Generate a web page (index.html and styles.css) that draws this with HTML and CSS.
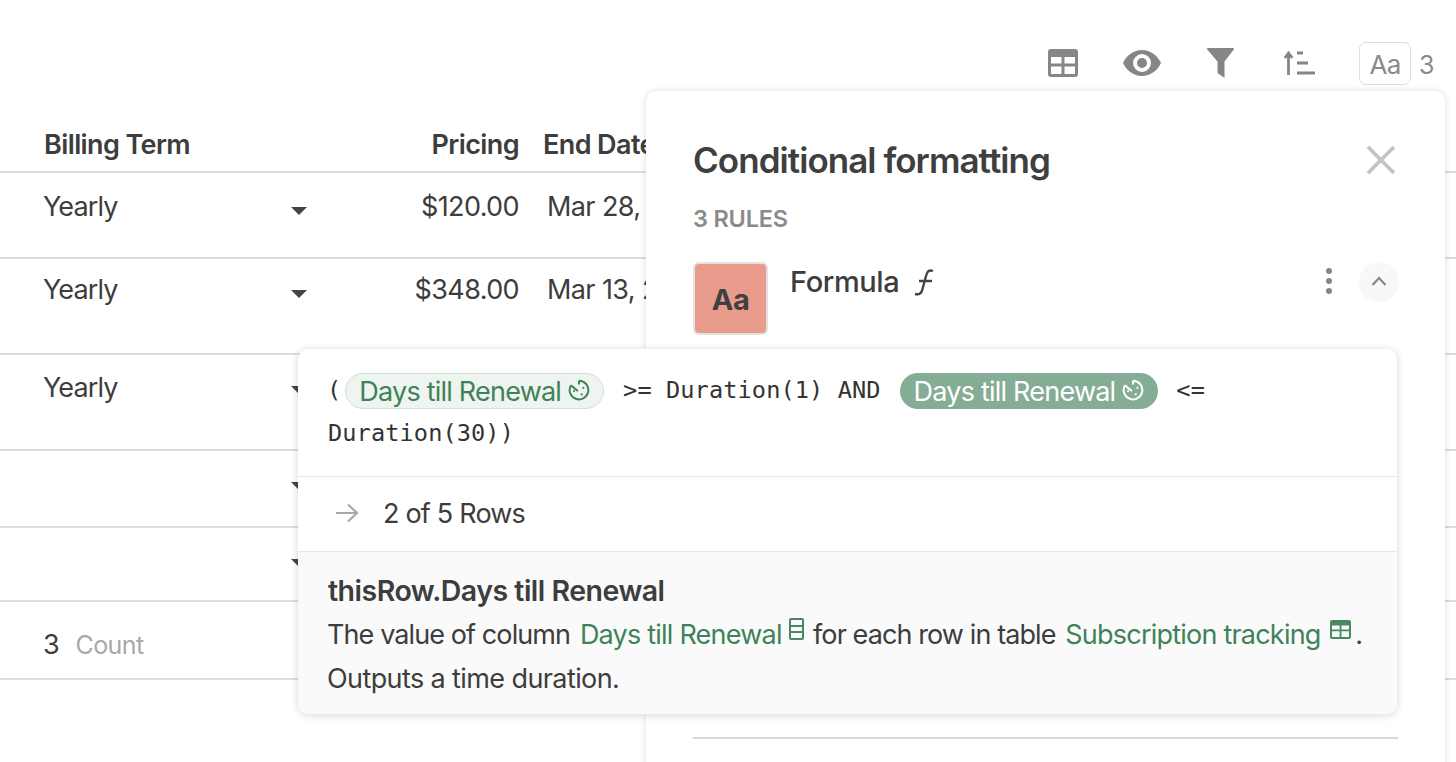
FILE: index.html
```html
<!DOCTYPE html>
<html lang="en">
<head>
    <meta charset="UTF-8">
    <title>Conditional formatting</title>
    <link rel="stylesheet" href="styles.css">
</head>
<body>
    <div class="page">
        <div class="toolbar">
            <svg class="tool tool-table" viewBox="0 0 30 28"><path fill="#868686" fill-rule="evenodd" d="M3 0h24a3 3 0 0 1 3 3v22a3 3 0 0 1-3 3H3a3 3 0 0 1-3-3V3a3 3 0 0 1 3-3zM3 8v6.500h10.500V8zM16.500 8v6.500H27V8zM3 17.500V25h10.500v-7.500zM16.500 17.500V25H27v-7.500z"/></svg>
            <svg class="tool tool-eye" viewBox="0 0 38 26"><path fill="#868686" fill-rule="evenodd" d="M19 0c8.500 0 15.500 5.500 19 13-3.500 7.500-10.500 13-19 13S3.500 20.500 0 13C3.500 5.500 10.500 0 19 0zm0 4a9 9 0 1 0 0 18 9 9 0 0 0 0-18zm0 4a5 5 0 1 1 0 10 5 5 0 0 1 0-10z"/></svg>
            <svg class="tool tool-filter" viewBox="0 0 27 30"><path fill="#868686" d="M1 0h25a1 1 0 0 1 .8 1.600L17.500 13.500V30l-7-5V13.500L.2 1.600A1 1 0 0 1 1 0z"/></svg>
            <svg class="tool tool-sort" viewBox="0 0 31 26"><path fill="none" stroke="#868686" stroke-width="2.800" d="M4.500 25V3M.8 8l3.700-5 3.700 5M13 3h6M13 13h11M13 23h18"/></svg>
            <div class="aa-box">Aa</div>
            <span class="aa-count">3</span>
        </div>

        <div class="table">
            <div class="row row-head">
                <div class="cell-term">Billing Term</div>
                <div class="cell-arrow"></div>
                <div class="cell-price">Pricing</div>
                <div class="cell-date cell-date-head">End Date</div>
            </div>
            <div class="row row-a">
                <div class="cell-term">Yearly</div>
                <div class="cell-arrow"><span class="caret"></span></div>
                <div class="cell-price">$120.00</div>
                <div class="cell-date">Mar 28, 2</div>
            </div>
            <div class="row row-b">
                <div class="cell-term">Yearly</div>
                <div class="cell-arrow"><span class="caret"></span></div>
                <div class="cell-price">$348.00</div>
                <div class="cell-date">Mar 13, 2</div>
            </div>
            <div class="row row-c">
                <div class="cell-term">Yearly</div>
                <div class="cell-arrow"><span class="caret"></span></div>
            </div>
            <div class="row row-d">
                <div class="cell-term"></div>
                <div class="cell-arrow"><span class="caret"></span></div>
            </div>
            <div class="row row-e">
                <div class="cell-term"></div>
                <div class="cell-arrow"><span class="caret"></span></div>
            </div>
            <div class="row row-foot">
                <div class="cell-term">3 <span class="count">Count</span></div>
            </div>
        </div>

        <div class="panel">
            <div class="panel-head">
                <h1>Conditional formatting</h1>
                <svg class="close" viewBox="0 0 30 30"><path fill="none" stroke="#c4c4c4" stroke-width="3.800" d="M2 2l26 26M28 2L2 28"/></svg>
            </div>
            <div class="rules-label">3 RULES</div>
            <div class="rule">
                <div class="swatch">Aa</div>
                <div class="rule-name">Formula
                    <svg class="fx" viewBox="0 0 22 27"><path fill="none" stroke="#444" stroke-width="2.400" d="M20 2c-4-1.500-6 .5-7 5L9.500 20c-1 4.500-3 6-7.500 5M6 12h13"/></svg>
                </div>
                <div class="rule-actions">
                    <svg class="dots" viewBox="0 0 8 28"><circle cx="4" cy="4" r="3" fill="#868686"/><circle cx="4" cy="14" r="3" fill="#868686"/><circle cx="4" cy="24" r="3" fill="#868686"/></svg>
                    <div class="collapse"><svg viewBox="0 0 16 10"><path fill="none" stroke="#868686" stroke-width="2.200" d="M1.500 9L8 2l6.500 7"/></svg></div>
                </div>
            </div>
            <div class="panel-rule"></div>
        </div>

        <div class="popup">
            <div class="formula">
                <span class="mono">(</span>
                <span class="pill pill-light">Days till Renewal
                    <svg class="clock" viewBox="0 0 20 20"><g fill="none" stroke="currentColor" stroke-width="1.800"><path d="M10 1.500a8.500 8.500 0 1 1-7.400 4.300"/><path d="M10 1.500V5M2.600 5.800L9 11"/></g><circle cx="5.500" cy="11" r="1" fill="currentColor"/><circle cx="14" cy="8" r="1" fill="currentColor"/><circle cx="12.500" cy="14" r="1" fill="currentColor"/></svg>
                </span>
                <span class="mono op">&gt;= Duration(1) AND</span>
                <span class="pill pill-dark">Days till Renewal
                    <svg class="clock" viewBox="0 0 20 20"><g fill="none" stroke="currentColor" stroke-width="1.800"><path d="M10 1.500a8.500 8.500 0 1 1-7.400 4.300"/><path d="M10 1.500V5M2.600 5.800L9 11"/></g><circle cx="5.500" cy="11" r="1" fill="currentColor"/><circle cx="14" cy="8" r="1" fill="currentColor"/><circle cx="12.500" cy="14" r="1" fill="currentColor"/></svg>
                </span>
                <span class="mono op">&lt;=</span>
                <div class="mono formula-line">Duration(30))</div>
            </div>
            <div class="result">
                <svg class="arrow" viewBox="0 0 24 20"><path fill="none" stroke="#a8a8a8" stroke-width="2.200" d="M1 10h21M13 1.500l9 8.500-9 8.500"/></svg>
                <span>2 of 5 Rows</span>
            </div>
            <div class="help">
                <div class="help-title">thisRow.Days till Renewal</div>
                <div class="help-text help-refs">The value of column <span class="ref">Days till Renewal</span>
                    <svg class="ref-icon ref-col" viewBox="0 0 15 22"><path fill="none" stroke="#4a8a63" stroke-width="2" d="M2 1h11a1 1 0 0 1 1 1v18a1 1 0 0 1-1 1H2a1 1 0 0 1-1-1V2a1 1 0 0 1 1-1zM1 8h13M1 14h13"/></svg>
                    for each row in table <span class="ref">Subscription tracking</span>
                    <svg class="ref-icon ref-table" viewBox="0 0 21 19"><path fill="#4a8a63" fill-rule="evenodd" d="M2 0h17a2 2 0 0 1 2 2v15a2 2 0 0 1-2 2H2a2 2 0 0 1-2-2V2a2 2 0 0 1 2-2zM2 5.500v4h7.600v-4zM11.400 5.500v4H19v-4zM2 11.300V17h7.600v-5.700zM11.400 11.300V17H19v-5.700z"/></svg>.
                </div>
                <div class="help-text">Outputs a time duration.</div>
            </div>
        </div>
    </div>
</body>
</html>
```

FILE: styles.css
```css
html, body {
    margin: 0;
    padding: 0;
    background: #fff;
}

.page {
    position: relative;
    width: 1456px;
    height: 762px;
    overflow: hidden;
    font-family: Inter, "Liberation Sans", sans-serif;
    font-size: 27px;
    letter-spacing: -0.6px;
    color: #3d3d3d;
}

/* toolbar */
.toolbar {
    display: flex;
    align-items: center;
    height: 44px;
    padding: 41px 22px 0 0;
    justify-content: flex-end;
}

.tool {
    display: block;
    flex: none;
}

.tool-table { width: 30px; height: 28px; margin-right: 45px; }
.tool-eye { width: 38px; height: 26px; margin-right: 46px; }
.tool-filter { width: 27px; height: 30px; margin-right: 50px; }
.tool-sort { width: 31px; height: 26px; margin-right: 44px; }

.aa-box {
    width: 50px;
    height: 39px;
    padding-top: 2px;
    border: 1px solid #ddd;
    border-radius: 7px;
    display: flex;
    align-items: center;
    justify-content: center;
    font-size: 26px;
    letter-spacing: -0.8px;
    color: #8a8a8a;
}

.aa-count {
    margin-left: 8px;
    padding-top: 3px;
    width: 15px;
    font-size: 25px;
    color: #8a8a8a;
}

/* table */
.row {
    display: grid;
    grid-template-columns: 44px 240px 30px 205px 127px;
    border-bottom: 2px solid #ddd;
    box-sizing: border-box;
}

.row-head { height: 88px; padding-top: 42px; font-weight: 600; }
.row-a { height: 86px; padding-top: 16px; }
.row-b { height: 96px; padding-top: 13px; }
.row-c { height: 96px; padding-top: 15px; }
.row-d { height: 77px; padding-top: 15px; }
.row-e { height: 74px; padding-top: 15px; }
.row-foot { height: 78px; padding-top: 25px; }

.cell-term {
    grid-column: 2;
    height: 36px;
    line-height: 36px;
    margin-left: -1px;
    letter-spacing: -0.9px;
}

.row-head .cell-term {
    margin-left: 0;
    letter-spacing: -0.6px;
}

.cell-arrow { grid-column: 3; height: 36px; line-height: 36px; }
.cell-price { grid-column: 4; text-align: right; line-height: 36px; }

.cell-date {
    grid-column: 5;
    padding-left: 28px;
    line-height: 36px;
    white-space: nowrap;
}

.cell-date-head { padding-left: 24px; }

.caret {
    display: block;
    width: 0;
    height: 0;
    margin: 16px 0 0 7px;
    border-left: 8px solid transparent;
    border-right: 8px solid transparent;
    border-top: 8px solid #444;
}

.row-a .caret,
.row-b .caret {
    margin-top: 18px;
}

.count {
    margin-left: 10px;
    font-size: 25px;
    letter-spacing: -0.6px;
    color: #a8a8a8;
}

/* side panel */
.panel {
    position: absolute;
    left: 646px;
    top: 91px;
    width: 799px;
    height: 700px;
    box-sizing: border-box;
    padding: 48px 49px 0 47px;
    background: #fff;
    border-radius: 10px;
    box-shadow: 0 0 6px rgba(0, 0, 0, 0.14);
}

.panel-head {
    display: flex;
    align-items: center;
    justify-content: space-between;
    height: 42px;
}

.panel-head h1 {
    margin: 0;
    font-size: 35px;
    font-weight: 600;
    letter-spacing: -0.95px;
    color: #3f3f3f;
}

.close {
    width: 30px;
    height: 30px;
}

.rules-label {
    margin-top: 24px;
    font-size: 23.5px;
    line-height: 28px;
    font-weight: 600;
    letter-spacing: -0.2px;
    color: #8a8a8a;
}

.rule {
    display: flex;
    margin-top: 29px;
}

.swatch {
    width: 75px;
    height: 73px;
    display: flex;
    align-items: center;
    justify-content: center;
    padding-top: 2px;
    box-sizing: border-box;
    background: #ea9c8c;
    border: 2px solid #e2e2e2;
    border-radius: 6px;
    font-weight: 700;
    font-size: 29px;
    color: #404040;
    flex: none;
}

.rule-name {
    display: flex;
    align-items: flex-start;
    margin-left: 22px;
    padding-top: 1px;
    font-size: 29px;
    line-height: 38px;
    font-weight: 500;
    letter-spacing: -0.4px;
    flex: 1;
}

.fx {
    width: 22px;
    height: 27px;
    margin: 6px 0 0 14px;
}

.rule-actions {
    display: flex;
    align-items: flex-start;
    margin-right: -3px;
}

.dots {
    width: 8px;
    height: 28px;
    margin: 5px 26px 0 0;
}

.collapse {
    width: 40px;
    height: 40px;
    border-radius: 50%;
    background: #f8f8f8;
    display: flex;
    align-items: center;
    justify-content: center;
}

.collapse svg {
    width: 16px;
    height: 10px;
    margin-top: -3px;
}

.panel-rule {
    position: absolute;
    left: 47px;
    right: 47px;
    top: 646px;
    border-top: 2px solid #d8d8d8;
}

/* formula popup */
.popup {
    position: absolute;
    left: 298px;
    top: 349px;
    width: 1099px;
    height: 365px;
    display: flex;
    flex-direction: column;
    background: #fff;
    border-radius: 10px;
    box-shadow: 0 1px 8px rgba(0, 0, 0, 0.16);
    overflow: hidden;
}

.formula {
    height: 128px;
    padding: 23px 29px 0;
    box-sizing: border-box;
    border-bottom: 1px solid #e8e8e8;
    flex: none;
}

.mono {
    font-family: "DejaVu Sans Mono", "Liberation Mono", monospace;
    font-size: 23.6px;
    letter-spacing: 0.1px;
    color: #333;
}

.op {
    margin-left: 12px;
    margin-right: 12px;
}

.formula-line {
    margin: 6px 0 0 1px;
    line-height: 37px;
}

.pill {
    display: inline-flex;
    align-items: center;
    height: 36px;
    box-sizing: border-box;
    border-radius: 18px;
    font-size: 27px;
    letter-spacing: -0.78px;
    vertical-align: middle;
    white-space: nowrap;
}

.pill-light {
    padding: 2px 13px 0;
    background: #eef4ef;
    border: 1px solid #cfe0d4;
    color: #3f8259;
    margin-left: -3px;
}

.pill-dark {
    padding: 2px 14px 0;
    margin-right: -1px;
    background: #85ad95;
    color: #fff;
}

.clock {
    width: 22px;
    height: 22px;
    margin: -4px 0 0 7px;
}

.result {
    display: flex;
    align-items: center;
    height: 72px;
    padding-bottom: 2px;
    flex: none;
    padding-left: 37px;
    letter-spacing: -0.8px;
}

.arrow {
    width: 24px;
    height: 20px;
    margin-right: 24px;
}

.help {
    flex: 1;
    background: #fafafa;
    border-top: 1px solid #e8e8e8;
    padding: 17px 29px 0;
}

.help-title {
    margin-left: 1px;
    font-size: 28.5px;
    font-weight: 600;
    letter-spacing: -0.5px;
    line-height: 44px;
}

.help-text {
    line-height: 44px;
    white-space: nowrap;
}

.help-refs {
    letter-spacing: -0.9px;
}

.ref {
    color: #3f8259;
    letter-spacing: -0.78px;
    margin-left: 3px;
}

.ref-icon {
    display: inline-block;
}

.ref-col {
    width: 15px;
    height: 22px;
    vertical-align: 4px;
    margin: 0 2px 0 1px;
}

.ref-table {
    width: 21px;
    height: 19px;
    vertical-align: 5px;
    margin: 0 4px 0 3px;
}
```
